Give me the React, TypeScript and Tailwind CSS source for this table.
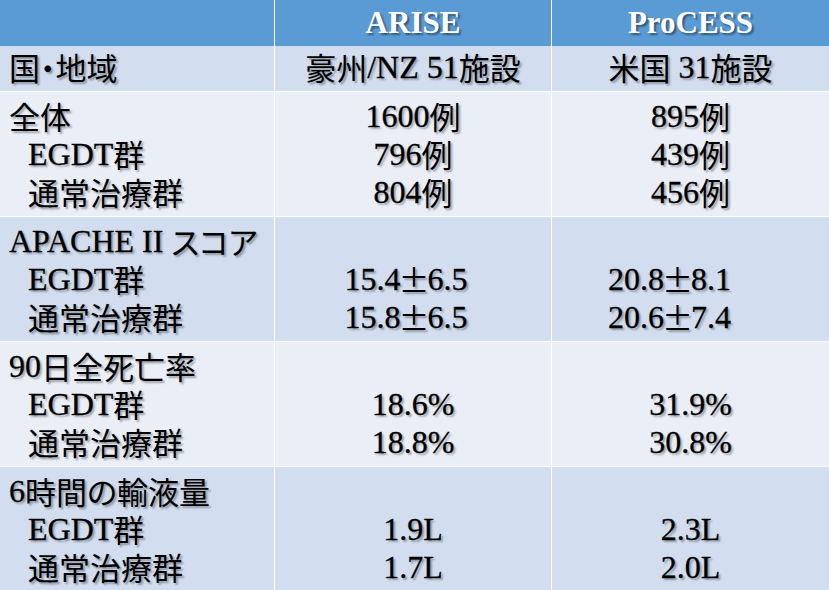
import React from "react";

const shadow = "[text-shadow:2px_2px_2px_rgba(0,0,0,0.33)]";

const CJK_RE = /([\u3000-\u30ff\u3400-\u9fff\uff00-\uffef±]+)/;

function T({ children }: { children: string }) {
  const parts = children.split(CJK_RE).filter((p) => p.length > 0);
  return (
    <span className="whitespace-pre">
      {parts.map((p, i) => {
        if (p === "±") {
          return (
            <span key={i} className="inline-block h-[38px] leading-[38px] align-top mx-[-2px] font-['Noto_Sans_CJK_JP'] text-[31px]">
              ±
            </span>
          );
        }
        return CJK_RE.test(p) ? (
          <span key={i} className="inline-block h-[38px] leading-[38px] align-top font-['Noto_Sans_CJK_JP'] [font-feature-settings:'palt'] text-[31px]">
            {p}
          </span>
        ) : (
          <span key={i} className="inline-block h-[38px] leading-[38px] align-top font-['Liberation_Serif'] text-[32px] [-webkit-text-stroke:0.3px_black]">
            {p}
          </span>
        );
      })}
    </span>
  );
}

type Row = {
  label: string;
  a: string[];
  b: string[];
  dark: boolean;
  firstBlank: boolean;
  aCls?: string;
  bCls?: string;
};

const rows: Row[] = [
  { label: "全体", a: ["1600例", "796例", "804例"], b: ["895例", "439例", "456例"], dark: false, firstBlank: false },
  {
    label: "APACHE II スコア",
    a: ["15.4±6.5", "15.8±6.5"],
    b: ["20.8±8.1", "20.6±7.4"],
    dark: true,
    firstBlank: true,
    aCls: "pr-[14px]",
    bCls: "pr-[42px]",
  },
  { label: "90日全死亡率", a: ["18.6%", "18.8%"], b: ["31.9%", "30.8%"], dark: false, firstBlank: true },
  { label: "6時間の輸液量", a: ["1.9L", "1.7L"], b: ["2.3L", "2.0L"], dark: true, firstBlank: true },
];

function ValueCell({ bg, values, blank, cls }: { bg: string; values: string[]; blank: boolean; cls?: string }) {
  return (
    <div className={`${bg} flex flex-col items-center pt-[5px] ${cls ?? ""}`}>
      {blank && <div className="h-[38px]" />}
      {values.map((v, i) => (
        <div key={i} className="h-[38px] leading-[38px] whitespace-nowrap">
          <T>{v}</T>
        </div>
      ))}
    </div>
  );
}

export default function App() {
  return (
    <div className={`w-[829px] h-[590px] overflow-hidden bg-white flex flex-col text-black ${shadow}`}>
      <div className="grid grid-cols-[274px_276px_277px] gap-x-px h-[42px] shrink-0">
        <div className="bg-[#5b9bd5]" />
        <div className="bg-[#5b9bd5] flex items-center justify-center pb-[2px] text-white font-bold text-[31px] font-['Liberation_Serif'] [text-shadow:2px_2px_2px_rgba(0,0,0,0.45)]">
          ARISE
        </div>
        <div className="bg-[#5b9bd5] flex items-center justify-center pb-[2px] text-white font-bold text-[31px] font-['Liberation_Serif'] [text-shadow:2px_2px_2px_rgba(0,0,0,0.45)]">
          ProCESS
        </div>
      </div>
      <div className="grid grid-cols-[274px_276px_277px] gap-x-px h-[45px] mt-[4px] shrink-0">
        <div className="bg-[#d2deef] flex items-center pl-[9px] pb-[4px] whitespace-nowrap">
          <T>国・地域</T>
        </div>
        <div className="bg-[#d2deef] flex items-center justify-center pb-[4px] whitespace-nowrap">
          <T>豪州/NZ 51施設</T>
        </div>
        <div className="bg-[#d2deef] flex items-center justify-center pb-[4px] whitespace-nowrap">
          <T>米国 31施設</T>
        </div>
      </div>
      {rows.map((r, idx) => {
        const bg = r.dark ? "bg-[#d2deef]" : "bg-[#eaeff7]";
        return (
          <div key={idx} className="grid grid-cols-[274px_276px_277px] gap-x-px h-[124px] mt-px shrink-0">
            <div className={`${bg} flex flex-col pt-[5px] pl-[9px] whitespace-nowrap`}>
              <div className="h-[38px] leading-[38px]">
                <T>{r.label}</T>
              </div>
              <div className="h-[38px] leading-[38px] pl-[19px]">
                <T>EGDT群</T>
              </div>
              <div className="h-[38px] leading-[38px] pl-[19px]">
                <T>通常治療群</T>
              </div>
            </div>
            <ValueCell bg={bg} values={r.a} blank={r.firstBlank} cls={r.aCls} />
            <ValueCell bg={bg} values={r.b} blank={r.firstBlank} cls={r.bCls} />
          </div>
        );
      })}
    </div>
  );
}
